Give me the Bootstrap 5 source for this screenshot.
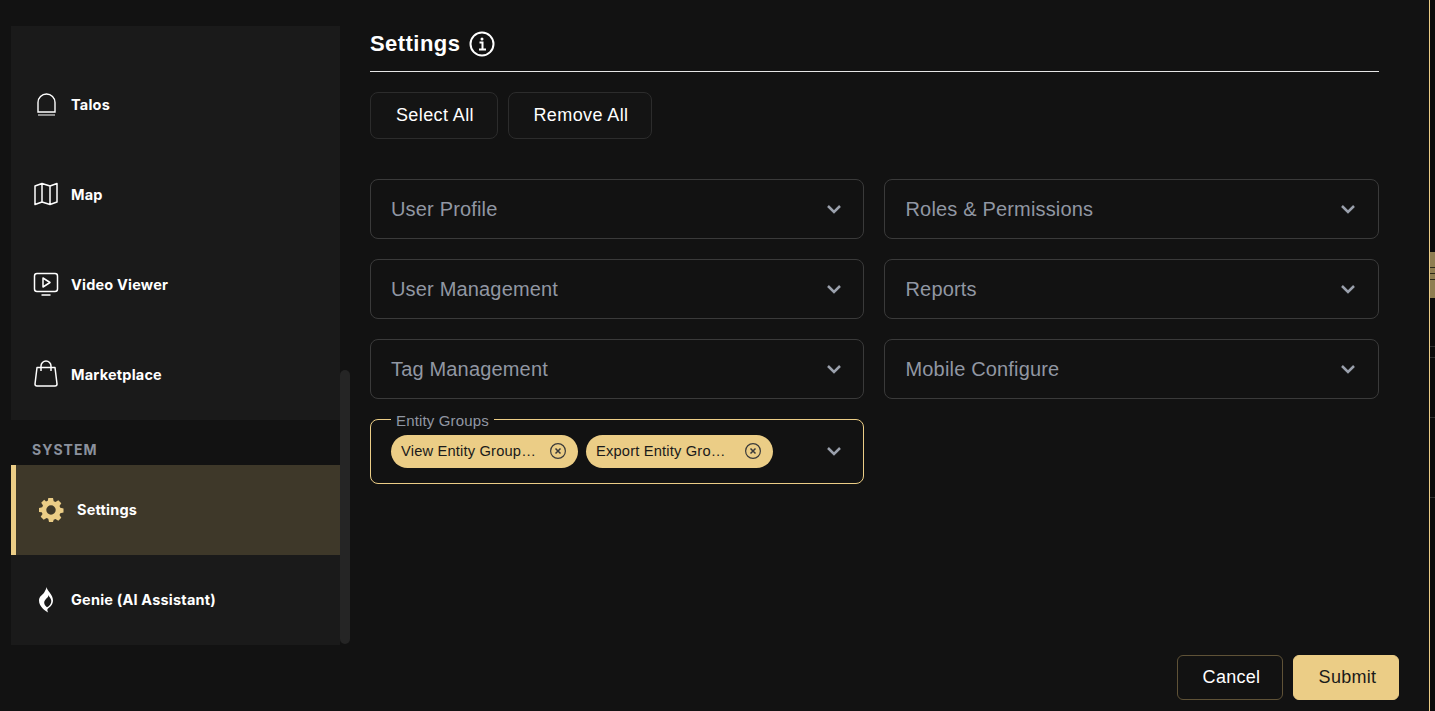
<!DOCTYPE html>
<html lang="en"><head><meta charset="utf-8"><title>Settings</title>
<link href="https://cdn.jsdelivr.net/npm/bootstrap@5.3.0/dist/css/bootstrap.min.css" rel="stylesheet">
<style>
html,body{height:100%;overflow:hidden;background:#121212;}
body{font-family:"Liberation Sans",Arial,sans-serif;color:#fff;}
.shell{height:711px;}
.side{width:339px;margin:26px 0 0 11px;height:619px;flex:none;position:relative;padding-right:10px;}
.side-block{background:#1a1a1a;}
.side-top{padding-top:33px;height:394px;}
.side-item{height:90px;font-family:"Inter",sans-serif;font-weight:700;font-size:14.5px;letter-spacing:.2px;color:#fff;padding-left:20px;}
.side-item svg{flex:none;}
.side-top span{margin-top:2px;}
.side-cat{height:45px;padding:19px 0 0 21px;font-size:14px;font-weight:700;letter-spacing:1px;color:#8b919d;line-height:21px;font-family:"Inter",sans-serif;}
.side-on{background:#3e3829;border-left:5px solid #ebcd86;padding-left:21px;}
.thumb{position:absolute;left:329px;top:344px;width:10px;height:274px;background:#252525;border-radius:5px;}
.main-col{width:1009px;margin-left:20px;flex:none;position:relative;}
.ttl{height:44px;padding-top:27px;box-sizing:content-box;border-bottom:1px solid #e6e6e6;}
.ttl-row{gap:9px;}
.ttl h1{font-size:22px;font-weight:700;margin:0;line-height:34px;letter-spacing:.45px;}
.btn-row{margin-top:20px;gap:10px;}
.btn-ghost{height:47px;border:1px solid #2c2c2c;border-radius:8px;background:#141414;color:#fff;font-size:18px;letter-spacing:.4px;padding:0 0 0 2px;width:128px;}
.btn-wide{width:144px;}
.btn-ghost:hover{color:#fff;background:#141414;border-color:#2c2c2c;}
.pick-grid{display:grid;grid-template-columns:494px 495px;gap:20px;margin-top:40px;}
.pick{height:60px;border:1px solid #3a3a3a;border-radius:8px;padding:0 21px 0 20px;color:#9197a3;font-size:20px;letter-spacing:.17px;}
.pick:nth-child(odd){padding-right:20px;}
.pick:nth-child(even){padding-left:20.5px;}
.pick-open{position:relative;height:65px;border-color:#ebcd86;}
.pick-open>svg{margin-top:-1px;}
.pick-legend{position:absolute;left:20px;top:-8px;background:#121212;padding:0 5px;font-size:15px;letter-spacing:.15px;line-height:18px;color:#9197a3;}
.tag{height:33px;width:187px;border-radius:17px;background:#ebcd86;color:#1a1a1a;font-size:14.7px;padding:0 12px 0 10px;}
.tag span{overflow:hidden;white-space:nowrap;text-overflow:ellipsis;width:137px;display:block;line-height:20px;margin-bottom:1px;}
.tag svg{margin-top:-1px;flex:none;}
.foot{position:absolute;left:807px;top:655px;gap:10px;}
.btn-cancel,.btn-submit{width:106px;height:45px;border-radius:6px;font-size:18px;letter-spacing:.3px;padding:0 0 0 3px;}
.btn-cancel{border:1px solid #5f5237;color:#fff;background:#121212;}
.btn-submit{border:1px solid #ebcd86;color:#1a1a1a;background:#ebcd86;}
.edge{position:absolute;left:1429px;top:0;width:6px;height:711px;background:#0b0b0b;border-left:1px solid #ebcd86;}
.edge-pic{margin-top:252px;height:46px;padding-top:15px;background:#8f7e52;}
.edge-pic i{display:block;height:1px;background:#2c2818;margin-bottom:5px;}
.edge-rule{height:1px;background:#2e2e2e;}
</style></head><body>
<div class="shell d-flex position-relative">
  <nav class="side">
    <div class="side-block side-top">
      <div class="side-item d-flex align-items-center gap-2"><svg width="32" height="26" viewBox="0 0 32 26" fill="none" stroke="#fff" stroke-width="1.400"><path d="M7 21V11.500a8.500 8.500 0 0 1 17 0V21z"/><path d="M7 24h17" stroke="#ccc" stroke-width="1.300"/></svg><span>Talos</span></div>
      <div class="side-item d-flex align-items-center gap-2"><svg width="32" height="26" viewBox="0 0 32 26" fill="none" stroke="#fff" stroke-width="1.500" stroke-linejoin="round"><path d="M4 5 11 2.500l8 2.500 7-2.500v18.500l-7 2.500-8-2.500-7 2.500z M11 2.500v18.500 M19 5v18.500"/></svg><span>Map</span></div>
      <div class="side-item d-flex align-items-center gap-2"><svg width="32" height="26" viewBox="0 0 32 26" fill="none" stroke="#fff" stroke-width="1.500" stroke-linejoin="round"><rect x="3.500" y="2.500" width="23" height="18" rx="2.500"/><path d="M12 7v9l7-4.500z M10.500 24h9"/></svg><span>Video Viewer</span></div>
      <div class="side-item d-flex align-items-center gap-2"><svg width="32" height="28" viewBox="0 0 32 28" fill="none" stroke="#fff" stroke-width="1.500" stroke-linejoin="round"><path d="M6 7.500h18l2 16.500a2 2 0 0 1-2 2H6a2 2 0 0 1-2-2z M10 11V6a5 5 0 0 1 10 0v5"/></svg><span>Marketplace</span></div>
    </div>
    <div class="side-cat">SYSTEM</div>
    <div class="side-item side-on d-flex align-items-center gap-2"><svg width="32" height="26" viewBox="0 0 32 26"><path fill="#ebcd86" fill-rule="evenodd" d="M12 1h4l.7 3.200 1.800.8 2.800-1.800 3 3-1.800 2.800.8 1.800 3.200.7v4l-3.200.7-.8 1.800 1.800 2.800-3 3-2.800-1.800-1.800.8L16 25h-4l-.7-3.200-1.800-.8-2.800 1.800-3-3 1.800-2.800-.8-1.800L2 15v-4l3.200-.7.800-1.800-1.800-2.800 3-3L9 4.500l1.800-.8L11.300 1z M14 8.300a4.700 4.700 0 1 0 0 9.400 4.700 4.700 0 0 0 0-9.400z"/></svg><span>Settings</span></div>
    <div class="side-block side-item d-flex align-items-center gap-2"><svg width="32" height="28" viewBox="0 0 32 28"><path fill="#fff" fill-rule="evenodd" d="M15.500 1c.3 3.500 6.500 7.500 6.500 13.500 0 3.500-2.500 6.500-5 8-1 .8-.8 2 .2 4-2.500-1.200-4-2.800-5.700-4.300C9.500 20 8 17.500 8 14.500c0-4.500 4-5.500 5.500-8.500.8-1.600 1.700-3 2-5z M17.500 9c.2 3-4.300 4-4.300 7.800 0 1.800 1.300 3.400 2.800 4.400 2.500-1 4.300-3.500 4.300-6.200 0-2.800-2.300-4-2.800-6z"/></svg><span>Genie (AI Assistant)</span></div>
    <div class="thumb"></div>
  </nav>
  <main class="main-col">
    <div class="ttl"><div class="ttl-row d-flex align-items-center"><h1>Settings</h1><svg width="26" height="26" viewBox="0 0 26 26" fill="none" stroke="#fff"><circle cx="13" cy="13" r="11.500" stroke-width="2"/><circle cx="13" cy="8" r="1.500" fill="#fff" stroke="none"/><path d="M10.500 11.500H13.500V18 M10 18.500h7" stroke-width="2"/></svg></div></div>
    <div class="btn-row d-flex"><button class="btn btn-ghost" type="button">Select All</button><button class="btn btn-ghost btn-wide" type="button">Remove All</button></div>
    <div class="pick-grid">
      <div class="pick d-flex align-items-center justify-content-between"><span>User Profile</span><svg width="18" height="18" viewBox="0 0 18 18" fill="none" stroke="#9aa0ac" stroke-width="2.500"><path d="M3 6l6 6 6-6"/></svg></div>
      <div class="pick d-flex align-items-center justify-content-between"><span>Roles &amp; Permissions</span><svg width="18" height="18" viewBox="0 0 18 18" fill="none" stroke="#9aa0ac" stroke-width="2.500"><path d="M3 6l6 6 6-6"/></svg></div>
      <div class="pick d-flex align-items-center justify-content-between"><span>User Management</span><svg width="18" height="18" viewBox="0 0 18 18" fill="none" stroke="#9aa0ac" stroke-width="2.500"><path d="M3 6l6 6 6-6"/></svg></div>
      <div class="pick d-flex align-items-center justify-content-between"><span>Reports</span><svg width="18" height="18" viewBox="0 0 18 18" fill="none" stroke="#9aa0ac" stroke-width="2.500"><path d="M3 6l6 6 6-6"/></svg></div>
      <div class="pick d-flex align-items-center justify-content-between"><span>Tag Management</span><svg width="18" height="18" viewBox="0 0 18 18" fill="none" stroke="#9aa0ac" stroke-width="2.500"><path d="M3 6l6 6 6-6"/></svg></div>
      <div class="pick d-flex align-items-center justify-content-between"><span>Mobile Configure</span><svg width="18" height="18" viewBox="0 0 18 18" fill="none" stroke="#9aa0ac" stroke-width="2.500"><path d="M3 6l6 6 6-6"/></svg></div>
      <div class="pick pick-open d-flex align-items-center justify-content-between">
        <div class="pick-legend">Entity Groups</div>
        <div class="d-flex gap-2">
          <div class="tag d-flex align-items-center justify-content-between"><span>View Entity Group Permissions</span><svg width="16" height="16" viewBox="0 0 16 16" fill="none" stroke="#3a3a3a" stroke-width="1.200"><circle cx="8" cy="8" r="7.400"/><path d="M5.500 5.500l5 5M10.500 5.500l-5 5" stroke-width="1.500"/></svg></div>
          <div class="tag d-flex align-items-center justify-content-between"><span>Export Entity Group Permissions</span><svg width="16" height="16" viewBox="0 0 16 16" fill="none" stroke="#3a3a3a" stroke-width="1.200"><circle cx="8" cy="8" r="7.400"/><path d="M5.500 5.500l5 5M10.500 5.500l-5 5" stroke-width="1.500"/></svg></div>
        </div>
        <svg width="18" height="18" viewBox="0 0 18 18" fill="none" stroke="#9aa0ac" stroke-width="2.500"><path d="M3 6l6 6 6-6"/></svg>
      </div>
    </div>
    <div class="foot d-flex"><button class="btn btn-cancel" type="button">Cancel</button><button class="btn btn-submit" type="button">Submit</button></div>
  </main>
  <div class="edge"><div class="edge-pic"><i></i><i></i><i></i></div><div class="edge-rule mt-5"></div><div class="edge-rule" style="margin-top:10px"></div><div class="edge-rule" style="margin-top:59px"></div><div class="edge-rule" style="margin-top:79px"></div></div>
</div>
<script src="https://cdn.jsdelivr.net/npm/bootstrap@5.3.0/dist/js/bootstrap.bundle.min.js"></script>
</body></html>
